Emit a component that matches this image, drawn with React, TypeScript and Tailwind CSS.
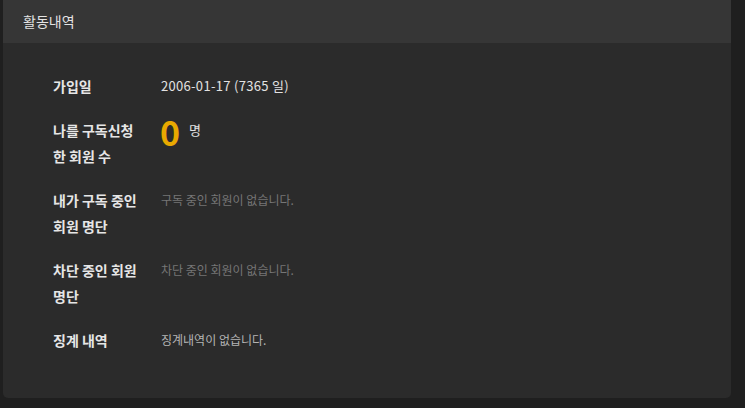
const rows: { label: string; value: React.ReactNode }[] = [
  {
    label: "가입일",
    value: <span className="tracking-[0.3px] text-[#e2e2e2]">2006-01-17 (7365 일)</span>,
  },
  {
    label: "나를 구독신청 한 회원 수",
    value: (
      <span className="flex items-start gap-[9px]">
        <span className="-ml-[1px] text-[34px] font-bold leading-[30px] text-[#e9a900]">0</span>
        <span className="text-[13px] text-[#e2e2e2]">명</span>
      </span>
    ),
  },
  {
    label: "내가 구독 중인 회원 명단",
    value: <span className="text-[12px] text-[#767676]">구독 중인 회원이 없습니다.</span>,
  },
  {
    label: "차단 중인 회원 명단",
    value: <span className="text-[12px] text-[#767676]">차단 중인 회원이 없습니다.</span>,
  },
  {
    label: "징계 내역",
    value: <span className="text-[12px] text-[#b4b4b4]">징계내역이 없습니다.</span>,
  },
];

export default function App() {
  return (
    <div
      className="min-h-[408px] bg-[#1f1f1f] pb-[10px] pl-[3px] pr-[14px]"
      style={{ fontFamily: '"Noto Sans CJK KR", "Noto Sans", sans-serif' }}
    >
      <div className="overflow-hidden rounded-b-[5px] bg-[#2b2b2b]">
        <div className="flex h-[43px] items-center bg-[#363636] px-5 text-[14px] text-[#e4e4e4]">
          활동내역
        </div>
        <div className="flex h-[355px] flex-col gap-[18px] px-[50px] pt-[30px]">
          {rows.map((r) => (
            <div key={r.label} className="flex text-[13px] leading-[26px]">
              <div className="w-[108px] shrink-0 pr-[20px] text-[14px] font-bold text-[#e6e6e6]">
                {r.label}
              </div>
              <div>{r.value}</div>
            </div>
          ))}
        </div>
      </div>
    </div>
  );
}
